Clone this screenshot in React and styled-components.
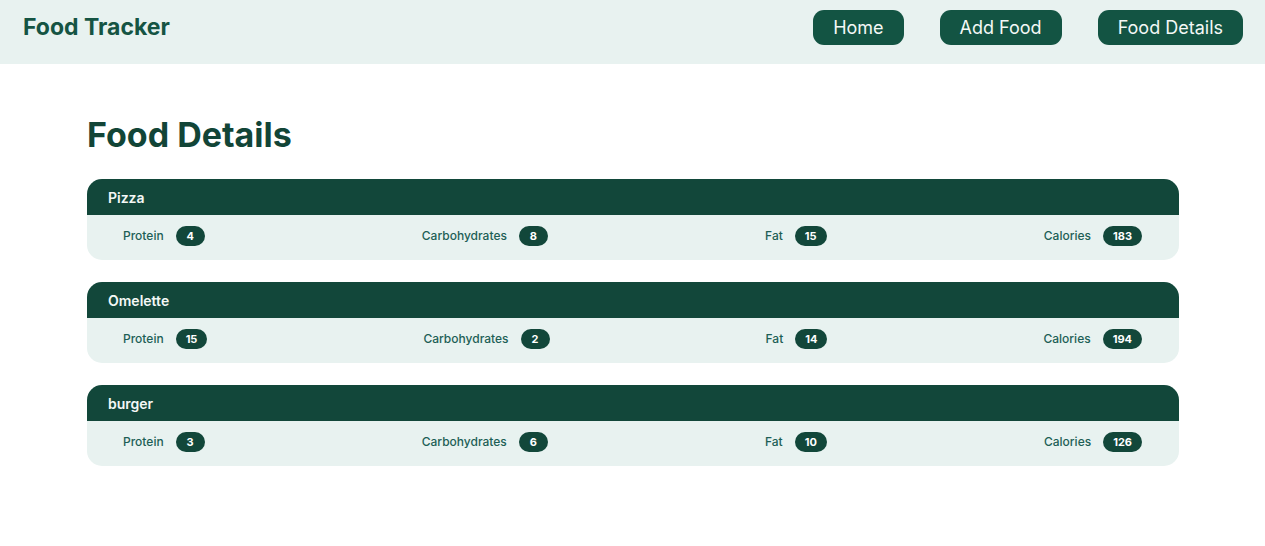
import styled, { createGlobalStyle } from "styled-components"

const GlobalStyle = createGlobalStyle`
    body{
        margin: 0;
        font-family: Inter, "Noto Sans", sans-serif;
        background: #fff;
    }
`

const foods = [
    { name: "Pizza", protein: 4, carbs: 8, fat: 15, calories: 183 },
    { name: "Omelette", protein: 15, carbs: 2, fat: 14, calories: 194 },
    { name: "burger", protein: 3, carbs: 6, fat: 10, calories: 126 },
]

function Stat({ label, value }) {
    return (
        <StatItem>
            <StatLabel>{label}</StatLabel>
            <Badge>{value}</Badge>
        </StatItem>
    )
}

function App() {
    return (
        <>
            <GlobalStyle />
            <Nav>
                <Brand>Food Tracker</Brand>
                <NavLinks>
                    <NavButton>Home</NavButton>
                    <NavButton>Add Food</NavButton>
                    <NavButton>Food Details</NavButton>
                </NavLinks>
            </Nav>
            <Main>
                <Title>Food Details</Title>
                <CardList>
                    {foods.map((food, index) => {
                        return (
                            <Card key={index}>
                                <CardHeader>{food.name}</CardHeader>
                                <CardBody>
                                    <Stat label="Protein" value={food.protein} />
                                    <Stat label="Carbohydrates" value={food.carbs} />
                                    <Stat label="Fat" value={food.fat} />
                                    <Stat label="Calories" value={food.calories} />
                                </CardBody>
                            </Card>
                        )
                    })}
                </CardList>
            </Main>
        </>
    )
}

export default App

const Nav = styled.nav`
    height: 64px;
    background-color: #e8f2f0;
    display: flex;
    align-items: center;
    justify-content: space-between;
    padding: 0 22px 0 23px;
    box-sizing: border-box;
`
const Brand = styled.div`
    font-size: 23px;
    font-weight: 700;
    color: #155443;
    margin-top: -10px;
`
const NavLinks = styled.div`
    display: flex;
    gap: 36px;
    margin-top: -10px;
`
const NavButton = styled.button`
    height: 35px;
    padding: 0 20px;
    border: none;
    border-radius: 11px;
    background-color: #135443;
    color: #f4f8f6;
    font-family: inherit;
    font-size: 18px;
    font-weight: 400;
    cursor: pointer;
`
const Main = styled.main`
    padding: 50px 86px 0 87px;
`
const Title = styled.h1`
    margin: 0 0 23px;
    font-size: 34px;
    font-weight: 700;
    color: #124537;
    line-height: 42px;
`
const CardList = styled.div`
    display: flex;
    flex-direction: column;
    gap: 22px;
`
const Card = styled.div`
    border-radius: 15px;
    overflow: hidden;
    background-color: #e8f2f0;
`
const CardHeader = styled.div`
    height: 36px;
    display: flex;
    align-items: center;
    padding: 0 21px;
    background-color: #12473a;
    color: #f4f8f6;
    font-size: 14px;
    font-weight: 600;
`
const CardBody = styled.div`
    height: 45px;
    display: flex;
    align-items: center;
    justify-content: space-between;
    padding: 0 37px 4px 36px;
    box-sizing: border-box;
`
const StatItem = styled.div`
    display: flex;
    align-items: center;
    gap: 12px;
`
const StatLabel = styled.span`
    font-size: 12px;
    font-weight: 500;
    color: #1d5f56;
`
const Badge = styled.span`
    height: 20px;
    min-width: 9px;
    padding: 0 10px;
    border-radius: 10px;
    background-color: #12473a;
    color: #fff;
    font-size: 11px;
    font-weight: 700;
    display: flex;
    align-items: center;
    justify-content: center;
`
